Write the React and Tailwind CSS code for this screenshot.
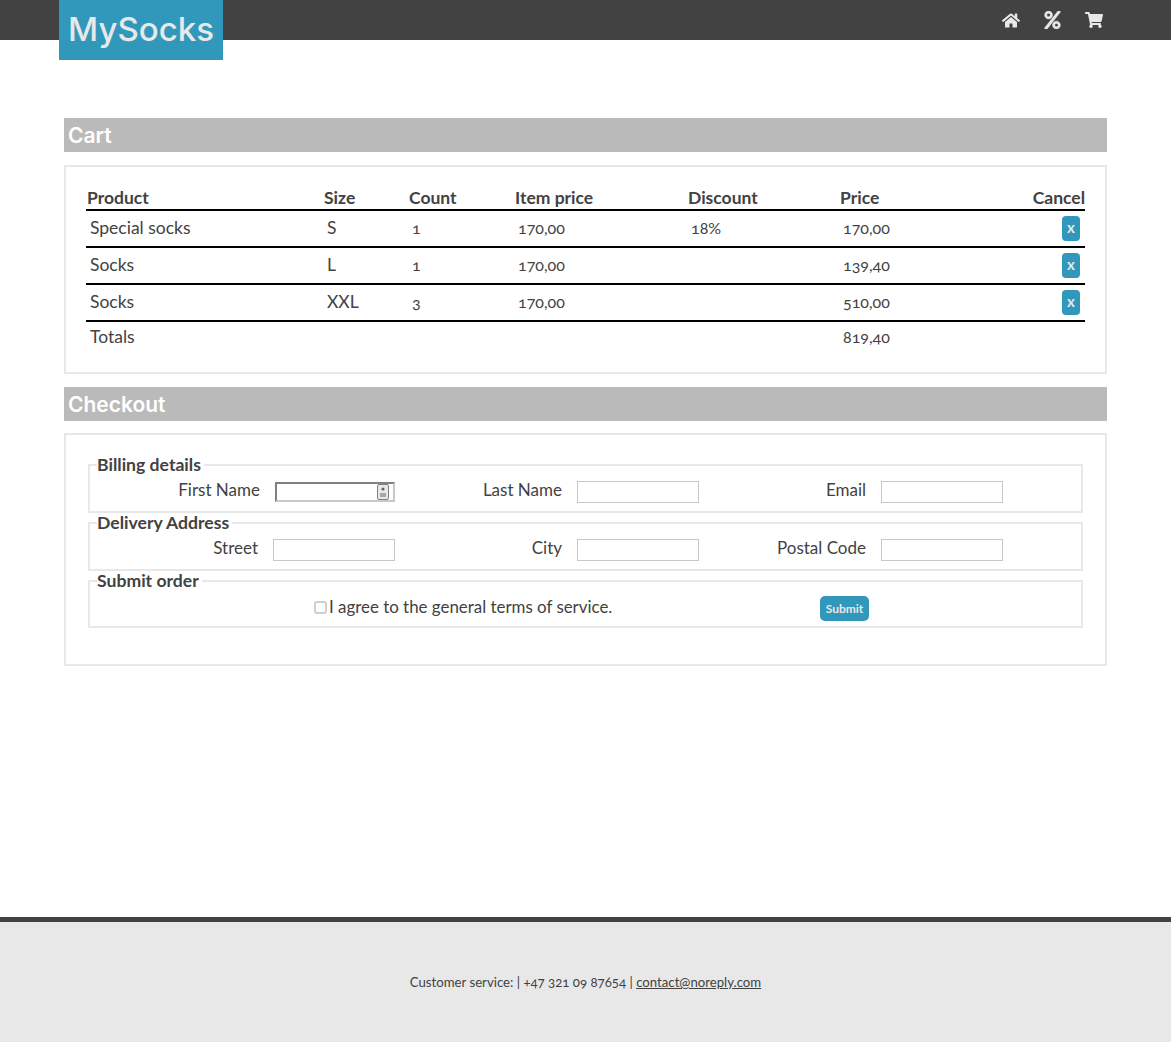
import { FaHome, FaPercent, FaShoppingCart } from 'react-icons/fa'

const rows = [
  { product: 'Special socks', size: 'S', count: '1', item: '170,00', discount: '18%', price: '170,00' },
  { product: 'Socks', size: 'L', count: '1', item: '170,00', discount: '', price: '139,40' },
  { product: 'Socks', size: 'XXL', count: '3', item: '170,00', discount: '', price: '510,00' },
]

const SectionTitle = ({ children }) => (
  <h2 className="h-[34px] bg-[#bababa] pl-[4px] font-['Inter',sans-serif] text-[21px] leading-[35px] font-semibold text-white">
    {children}
  </h2>
)

const Field = ({ label, autofill }) => (
  <div className="flex w-[304px] items-center justify-end">
    <label className="mr-[15px] pb-[5px]">{label}</label>
    {autofill ? (
      <div className="flex h-[20px] w-[120px] items-center justify-end border-2 border-t-[#808080] border-r-[#c8c8c8] border-b-[#c8c8c8] border-l-[#808080] pr-[4px]">
        <svg width="12" height="16" viewBox="0 0 12 16">
          <rect x="0.5" y="0.5" width="11" height="15" rx="1.5" fill="#e8e8e8" stroke="#808080" />
          <circle cx="6" cy="5" r="1.6" fill="#666666" />
          <path d="M3 9.5h6v1H3zM3 11.5h6v1H3z" fill="#666666" />
        </svg>
      </div>
    ) : (
      <input className="h-[22px] w-[122px] border border-[#c8c8c8] bg-white" type="text" />
    )}
  </div>
)

const Group = ({ title, children }) => (
  <fieldset className="h-[58px] border-2 border-[#e8e8e8] px-[1px] pb-[9px] last:h-[57px]">
    <legend className="ml-[6px] pr-[3px] text-[17.6px] leading-[20px] font-bold">{title}</legend>
    {children}
  </fieldset>
)

export default function App() {
  return (
    <div className="flex min-h-[1042px] flex-col bg-white font-['Lato',sans-serif] text-[17px] text-[#424242]">
      <header className="relative h-[40px] bg-[#424242]">
        <div className="absolute top-0 left-[59px] flex h-[60px] w-[164px] items-center justify-center bg-[#3198bc] font-['Inter',sans-serif] text-[33px] font-medium text-[#e8e8e8]">
          MySocks
        </div>
        <nav className="flex h-[40px] items-center justify-end gap-[24px] pr-[68px] text-[#e8e8e8]">
          <FaHome className="h-[17px] w-[18px]" />
          <FaPercent className="h-[18px] w-[17px] stroke-current stroke-[15]" />
          <FaShoppingCart className="h-[16px] w-[18px]" />
        </nav>
      </header>

      <main className="flex-1 px-[64px] pt-[78px]">
        <SectionTitle>Cart</SectionTitle>
        <section className="mt-[13px] h-[209px] border-2 border-[#e8e8e8] px-[20px] pt-[14px] text-[17.5px]">
          <table className="w-[999px] table-fixed border-collapse">
            <colgroup>
              <col className="w-[237px]" />
              <col className="w-[85px]" />
              <col className="w-[106px]" />
              <col className="w-[173px]" />
              <col className="w-[152px]" />
              <col />
              <col className="w-[60px]" />
            </colgroup>
            <thead>
              <tr className="h-[29px] border-b-2 border-black text-left align-bottom leading-[22px]">
                <th className="pl-[1px] font-bold">Product</th>
                <th className="pl-[1px] font-bold">Size</th>
                <th className="pl-[1px] font-bold">Count</th>
                <th className="pl-[1px] font-bold">Item price</th>
                <th className="pl-[1px] font-bold">Discount</th>
                <th className="pl-[1px] font-bold">Price</th>
                <th className="text-right font-bold">Cancel</th>
              </tr>
            </thead>
            <tbody className="oldstyle-nums">
              {rows.map((row, i) => (
                <tr key={i} className="h-[37px] border-b-2 border-black">
                  <td className="pl-[4px]">{row.product}</td>
                  <td className="pl-[4px]">{row.size}</td>
                  <td className="pb-[2px] pl-[4px] text-[16px]">{row.count}</td>
                  <td className="pb-[2px] pl-[4px] text-[16px]">{row.item}</td>
                  <td className="pb-[2px] pl-[4px] text-[16px]">{row.discount}</td>
                  <td className="pb-[2px] pl-[4px] text-[16px]">{row.price}</td>
                  <td className="pr-[5px] pb-[2px] text-right">
                    <button className="h-[25px] w-[18px] rounded-[4px] bg-[#3198bc] pb-[2px] text-[15px] leading-[23px] font-bold text-[#e8e8e8]">
                      x
                    </button>
                  </td>
                </tr>
              ))}
              <tr className="h-[32px]">
                <td className="pl-[4px]">Totals</td>
                <td />
                <td />
                <td />
                <td />
                <td className="pb-[2px] pl-[4px] text-[16px]">819,40</td>
                <td />
              </tr>
            </tbody>
          </table>
        </section>

        <div className="mt-[13px]">
          <SectionTitle>Checkout</SectionTitle>
        </div>
        <section className="mt-[12px] flex h-[233px] flex-col border-2 border-[#e8e8e8] px-[22px] pt-[20px]">
          <Group title="Billing details">
            <div className="mt-[2px] flex">
              <Field label="First Name" autofill />
              <Field label="Last Name" />
              <Field label="Email" />
            </div>
          </Group>
          <Group title="Delivery Address">
            <div className="mt-[2px] flex">
              <Field label="Street" />
              <Field label="City" />
              <Field label="Postal Code" />
            </div>
          </Group>
          <Group title="Submit order">
            <div className="mt-[3px] flex items-center">
              <input
                type="checkbox"
                className="mb-[2px] ml-[223px] h-[13px] w-[13px] appearance-none rounded-[3px] border-2 border-[#d0d0d0] bg-white"
              />
              <label className="mb-[4px] ml-[2px] w-[491px] text-[16.9px]">I agree to the general terms of service.</label>
              <button className="h-[25px] w-[49px] rounded-[5px] bg-[#3198bc] text-[12px] font-bold text-[#e8e8e8]">
                Submit
              </button>
            </div>
          </Group>
        </section>
      </main>

      <footer className="flex h-[125px] items-center justify-center border-t-[5px] border-[#424242] bg-[#e8e8e8] pt-[1px] text-[13.2px] oldstyle-nums">
        <p>
          Customer service: | +47 321 09 87654 | <a className="underline" href="#">contact@noreply.com</a>
        </p>
      </footer>
    </div>
  )
}
